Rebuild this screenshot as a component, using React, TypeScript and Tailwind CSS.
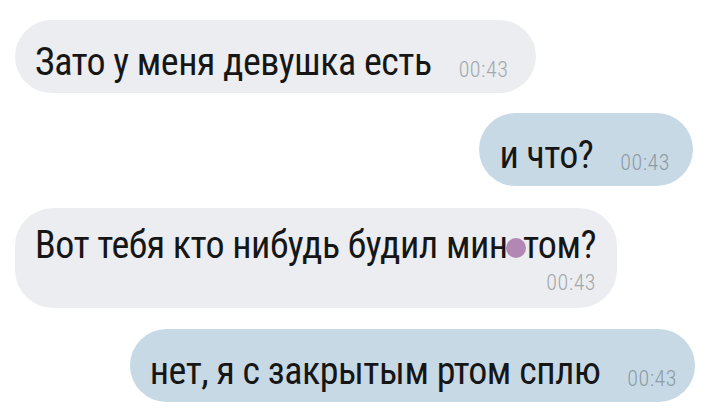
import React from 'react';

type Side = 'in' | 'out';

interface BubbleProps {
  side: Side;
  time: string;
  className?: string;
  children: React.ReactNode;
}

const textCls = "font-['Roboto_Condensed','Roboto',sans-serif] text-[38px] leading-none tracking-[-0.5px] text-[#161616]";
const timeCls = "font-['Roboto_Condensed','Roboto',sans-serif] font-light text-[22px] leading-none tracking-[0.5px]";

// single-line bubble: text and time share one row
const Bubble: React.FC<BubbleProps> = ({ side, time, className = '', children }) => (
  <div
    className={`flex items-end rounded-full h-[73px] pl-[20px] pb-[12px] ${
      side === 'in' ? 'bg-[#ebedf0] self-start' : 'bg-[#c7d9e5] self-end'
    } ${className}`}
  >
    <span className={textCls}>{children}</span>
    <span className={`${timeCls} ml-[27px] ${side === 'in' ? 'text-[#a2a8ad]' : 'text-[#8e9ba6]'}`}>{time}</span>
  </div>
);

const App: React.FC = () => {
  return (
    <div className="w-[707px] h-[414px] bg-white overflow-hidden flex flex-col pt-[20px] px-[14px]">
      <Bubble side="in" time="00:43" className="ml-[1px] pr-[28px]">
        Зато у меня девушка есть
      </Bubble>

      <Bubble side="out" time="00:43" className="mt-[20px] pr-[23px]">
        и что?
      </Bubble>

      {/* long message: time drops below the text, one letter hidden under a dot */}
      <div className="self-start mt-[22px] ml-[1px] bg-[#ebedf0] rounded-[38px] pl-[20px] pr-[21px] pt-[18px] pb-[14px] flex flex-col">
        <span className={textCls}>
          Вот тебя кто нибудь будил мин
          <span className="relative text-transparent">
            у
            <span className="absolute left-[-2px] top-[15px] w-[20px] h-[20px] rounded-full bg-[#b387b3]" />
          </span>
          том?
        </span>
        <span className={`${timeCls} self-end mt-[8px] text-[#a2a8ad]`}>00:43</span>
      </div>

      <Bubble side="out" time="00:43" className="mt-[21px] mr-[-2px] h-[72px] pr-[18px]">
        нет, я с закрытым ртом сплю
      </Bubble>
    </div>
  );
};

export default App;
